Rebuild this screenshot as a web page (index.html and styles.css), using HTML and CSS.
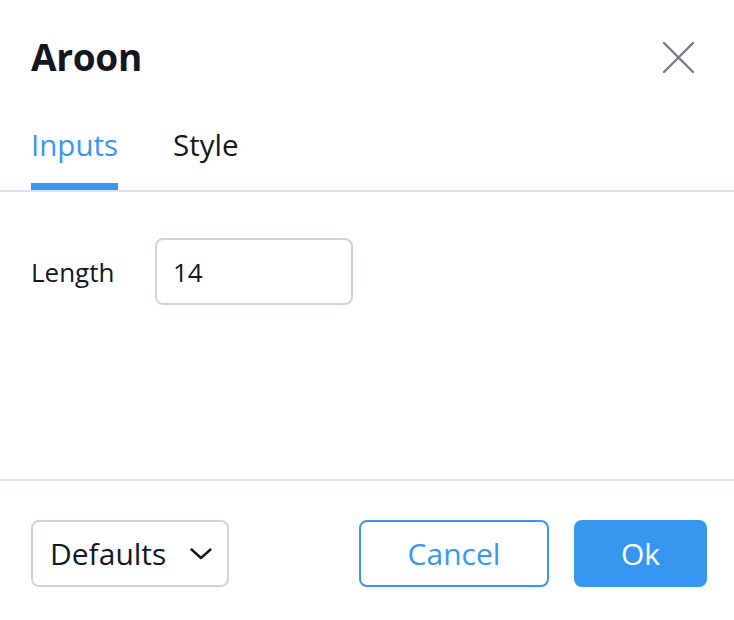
FILE: index.html
```html
<!DOCTYPE html>
<html>
<head>
<meta charset="utf-8">
<link rel="stylesheet" href="styles.css">
</head>
<body>
<div class="dialog">
  <div class="header">
    <div class="title">Aroon</div>
    <button class="close" aria-label="Close">
      <svg width="31" height="31" viewBox="0 0 31 31"><path d="M1 1 L30 30 M30 1 L1 30" stroke="#787b86" stroke-width="2.4" stroke-linecap="round" fill="none"/></svg>
    </button>
  </div>
  <div class="tabs">
    <div class="tab active">Inputs</div>
    <div class="tab">Style</div>
  </div>
  <div class="content">
    <div class="row">
      <div class="label">Length</div>
      <div class="input">14</div>
    </div>
  </div>
  <div class="footer">
    <div class="select">
      <span>Defaults</span>
      <svg width="22" height="12" viewBox="0 0 22 12"><path d="M1.5 1.5 L11 10 L20.5 1.5" stroke="#131722" stroke-width="2.4" fill="none" stroke-linecap="round" stroke-linejoin="round"/></svg>
    </div>
    <div class="actions">
      <div class="btn cancel">Cancel</div>
      <div class="btn ok">Ok</div>
    </div>
  </div>
</div>
</body>
</html>
```

FILE: styles.css
```css
html, body {
  margin: 0;
  padding: 0;
  background: #ffffff;
}
body {
  font-family: "Open Sans", "Noto Sans", sans-serif;
  color: #131722;
}
.dialog {
  width: 734px;
  height: 620px;
  display: flex;
  flex-direction: column;
  box-sizing: border-box;
}
.header {
  height: 114px;
  display: flex;
  align-items: center;
  justify-content: space-between;
  padding: 0 40px 0 31px;
  box-sizing: border-box;
}
.title {
  font-size: 37px;
  font-weight: 700;
  line-height: 40px;
  letter-spacing: -0.3px;
}
.close {
  border: 0;
  background: none;
  padding: 0;
  width: 31px;
  height: 31px;
  display: block;
}
.close svg { display: block; }
.tabs {
  height: 78px;
  display: flex;
  align-items: flex-end;
  padding-left: 31px;
  gap: 55px;
  border-bottom: 2px solid #e0e3eb;
  box-sizing: border-box;
}
.tab {
  font-size: 29.5px;
  line-height: 40px;
  padding-bottom: 18px;
  border-bottom: 7px solid transparent;
}
.tab.active {
  color: #3797f0;
  border-bottom-color: #3797f0;
}
.content {
  height: 289px;
  flex-shrink: 0;
  border-bottom: 2px solid #e0e3eb;
  padding: 46px 31px 0;
  box-sizing: border-box;
}
.row {
  display: flex;
  align-items: center;
  gap: 40px;
}
.label {
  font-size: 26px;
  width: 84px;
}
.input {
  width: 198px;
  height: 67px;
  box-sizing: border-box;
  border: 2px solid #d1d4dc;
  border-radius: 8px;
  font-size: 26px;
  display: flex;
  align-items: center;
  padding-left: 16px;
}
.footer {
  flex: 1;
  display: flex;
  justify-content: space-between;
  padding: 39px 27px 0 31px;
  box-sizing: border-box;
}
.select {
  width: 198px;
  height: 67px;
  box-sizing: border-box;
  border: 2px solid #d1d4dc;
  border-radius: 8px;
  display: flex;
  align-items: center;
  justify-content: space-between;
  padding: 0 15px 0 17px;
  font-size: 30px;
}
.select svg { display: block; }
.actions {
  display: flex;
  gap: 25px;
}
.btn {
  height: 67px;
  box-sizing: border-box;
  border-radius: 8px;
  display: flex;
  align-items: center;
  justify-content: center;
  font-size: 30px;
}
.cancel {
  width: 190px;
  border: 2px solid #3797f0;
  color: #3797f0;
}
.ok {
  width: 133px;
  background: #3797f0;
  color: #ffffff;
}
```
